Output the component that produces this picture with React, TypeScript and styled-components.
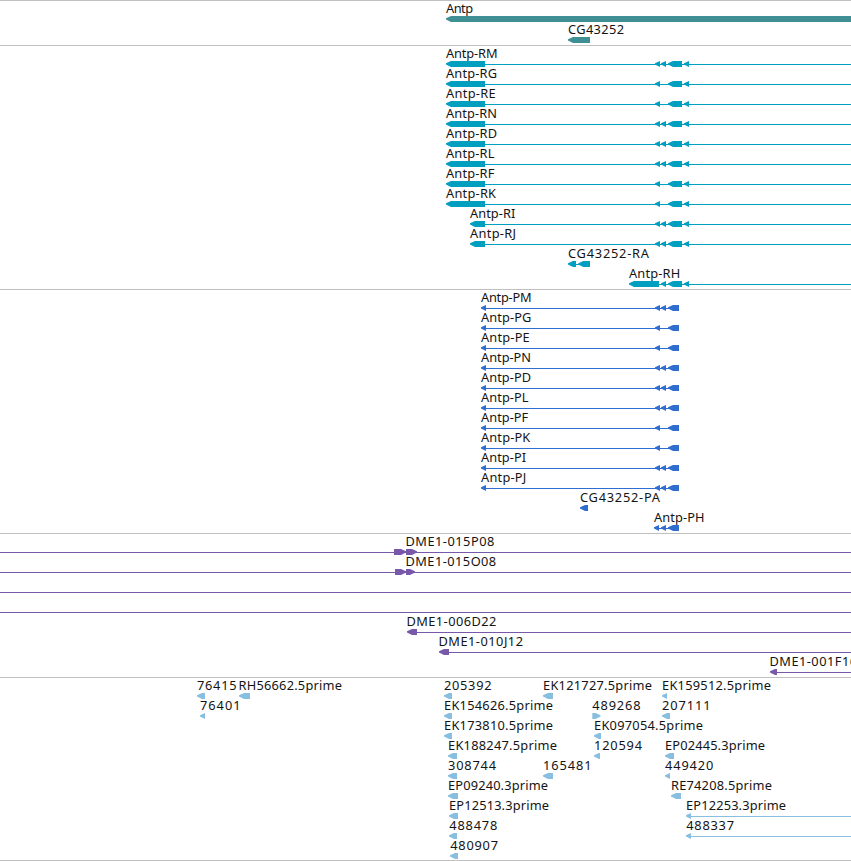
import React, { FC } from 'react';
import styled, { createGlobalStyle } from 'styled-components';

const VIEW_WIDTH = 851;
const ROW_HEIGHT = 20;
const BAR_TOP = 15;
const BAR_HEIGHT = 6;
const HEAD = 5;

const GlobalStyle = createGlobalStyle`
  body {
    margin: 0;
    background: #fff;
    overflow: hidden;
  }
`;

const Browser = styled.main`
  display: flex;
  flex-direction: column;
  width: ${VIEW_WIDTH}px;
  height: 861px;
  box-sizing: border-box;
  border-bottom: 1px solid #c0c0c0;
  overflow: hidden;
`;

const TrackPanel = styled.section<{ $color: string; $gap?: number }>`
  display: flex;
  flex-direction: column;
  flex-shrink: 0;
  gap: ${({ $gap }) => $gap || 0}px;
  padding-bottom: 3px;
  border-top: 1px solid #c0c0c0;
  color: ${({ $color }) => $color};

  &:last-child {
    padding-bottom: 2px;
  }
`;

const Lane = styled.svg`
  display: block;
  flex-shrink: 0;
  overflow: visible;
`;

const Label = styled.text`
  font-family: 'Noto Sans', 'DejaVu Sans', sans-serif;
  font-size: 12.8px;
  fill: #141414;
`;

const Intron = styled.rect`
  fill: currentColor;
`;

const Exon = styled.polygon`
  fill: currentColor;
`;

type Span = [number, number];

interface Feature {
  name?: string;
  // label start and end
  at?: Span;
  exons?: Span[];
  line?: Span;
  forward?: boolean;
}

interface Track {
  id: string;
  color: string;
  gap?: number;
  rows: Feature[][];
}

const arrow = ([start, end]: Span, forward?: boolean) => {
  const top = BAR_TOP;
  const mid = BAR_TOP + BAR_HEIGHT / 2;
  const bottom = BAR_TOP + BAR_HEIGHT;
  if (forward) {
    const neck = Math.max(start, end - HEAD);
    return `${start},${top} ${neck},${top} ${end},${mid - 0.8} ${end},${mid + 0.6} ${neck},${bottom} ${start},${bottom}`;
  }
  const neck = Math.min(end, start + HEAD);
  return `${start},${mid + 0.6} ${start},${mid - 0.8} ${neck},${top} ${end},${top} ${end},${bottom} ${neck},${bottom}`;
};

const SHORT: Span[] = [[655, 660], [668, 682], [684, 689]];
const LONG: Span[] = [[655, 660], [661, 666], [668, 682], [684, 689]];

const transcript = (name: string, start: number, labelEnd: number, exons: Span[]): Feature[] => [
  { name, at: [start, labelEnd], exons: [[start, 485], ...exons], line: [485, VIEW_WIDTH] },
];

const protein = (name: string, labelEnd: number, full: boolean): Feature[] => [
  {
    name,
    at: [481, labelEnd],
    exons: full
      ? [[481, 486], [655, 660], [661, 666], [668, 679]]
      : [[481, 486], [655, 660], [668, 679]],
    line: [484, 672],
  },
];

const read = (name: string, start: number, end: number, labelEnd: number, labelStart = start): Feature => ({
  name,
  at: [labelStart, labelEnd],
  exons: [[start, end]],
});

const tracks: Track[] = [
  {
    id: 'genes',
    color: '#408f94',
    gap: 1,
    rows: [
      [{ name: 'Antp', at: [446, 473], exons: [[446, 851]] }],
      [read('CG43252', 568, 590, 624)],
    ],
  },
  {
    id: 'transcripts',
    color: '#009fc0',
    rows: [
      transcript('Antp-RM', 446, 497.5, LONG),
      transcript('Antp-RG', 446, 497, SHORT),
      transcript('Antp-RE', 446, 495.7, SHORT),
      transcript('Antp-RN', 446, 497, LONG),
      transcript('Antp-RD', 446, 497, LONG),
      transcript('Antp-RL', 446, 494.4, LONG),
      transcript('Antp-RF', 446, 494.4, SHORT),
      transcript('Antp-RK', 446, 496, SHORT),
      transcript('Antp-RI', 470, 515.3, LONG),
      transcript('Antp-RJ', 470, 516, LONG),
      [{ name: 'CG43252-RA', at: [568, 649], exons: [[568, 576], [578.3, 590]], line: [575, 582] }],
      [
        {
          name: 'Antp-RH',
          at: [629, 680.2],
          exons: [[629, 659], ...LONG.slice(1)],
          line: [658, VIEW_WIDTH],
        },
      ],
    ],
  },
  {
    id: 'proteins',
    color: '#306dd0',
    rows: [
      protein('Antp-PM', 531.5, true),
      protein('Antp-PG', 531.3, false),
      protein('Antp-PE', 529.7, false),
      protein('Antp-PN', 531, true),
      protein('Antp-PD', 531, true),
      protein('Antp-PL', 528.5, true),
      protein('Antp-PF', 528.2, false),
      protein('Antp-PK', 530.2, false),
      protein('Antp-PI', 526, true),
      protein('Antp-PJ', 526.3, true),
      [read('CG43252-PA', 580, 588, 660)],
      [
        {
          name: 'Antp-PH',
          at: [654, 704.5],
          exons: [[654, 659], [661, 666], [668, 679]],
          line: [657, 672],
        },
      ],
    ],
  },
  {
    id: 'bacs',
    color: '#7858a8',
    rows: [
      [{ name: 'DME1-015P08', at: [405.5, 494.3], exons: [[394, 406], [406, 417]], line: [0, VIEW_WIDTH], forward: true }],
      [{ name: 'DME1-015O08', at: [405.5, 496.2], exons: [[395, 406], [406, 415]], line: [0, VIEW_WIDTH], forward: true }],
      [{ line: [0, VIEW_WIDTH] }],
      [{ line: [0, VIEW_WIDTH] }],
      [{ name: 'DME1-006D22', at: [406.5, 496.3], exons: [[407, 417]], line: [416, VIEW_WIDTH] }],
      [{ name: 'DME1-010J12', at: [438.5, 523], exons: [[439, 449]], line: [448, VIEW_WIDTH] }],
      [{ name: 'DME1-001F16', at: [769.5, 857], exons: [[770, 777]], line: [776, VIEW_WIDTH] }],
    ],
  },
  {
    id: 'insertions',
    color: '#88bfe0',
    rows: [
      [
        read('76415', 197, 205, 236.5),
        read('RH56662.5prime', 239, 250, 342, 238.5),
        read('205392', 444, 452, 491.5),
        read('EK121727.5prime', 543, 553, 652),
        read('EK159512.5prime', 662, 667, 771),
      ],
      [
        read('76401', 200, 205, 240.5),
        read('EK154626.5prime', 444, 452, 553),
        { ...read('489268', 592.3, 600.5, 640.5, 592.3), forward: true },
        read('207111', 662, 670, 710.5),
      ],
      [
        read('EK173810.5prime', 444, 452, 553),
        read('EK097054.5prime', 594, 601, 703),
      ],
      [
        read('EK188247.5prime', 448, 457, 557),
        read('120594', 594, 600, 642),
        read('EP02445.3prime', 665, 674, 765),
      ],
      [
        read('308744', 448, 457, 496),
        read('165481', 543, 553, 591.7),
        read('449420', 665, 670, 713.3),
      ],
      [
        read('EP09240.3prime', 448, 458, 548),
        read('RE74208.5prime', 671, 681, 772),
      ],
      [
        read('EP12513.3prime', 449, 458, 549),
        { ...read('EP12253.3prime', 686, 691, 786), line: [689, VIEW_WIDTH] },
      ],
      [
        read('488478', 449, 457, 497.3, 449.3),
        { ...read('488337', 686, 691, 734, 686.3), line: [689, VIEW_WIDTH] },
      ],
      [read('480907', 450, 458, 498, 450.3)],
    ],
  },
];

const FeatureGlyph: FC<{ feature: Feature }> = ({ feature }) => {
  const { name, at, exons = [], line, forward } = feature;
  return (
    <g>
      {line && <Intron x={line[0]} y={BAR_TOP + 3} width={line[1] - line[0]} height={1} />}
      {exons.map((exon) => (
        <Exon key={exon[0]} points={arrow(exon, forward)} />
      ))}
      {name && at && (
        <Label x={at[0]} y={12} textLength={at[1] - at[0]} lengthAdjust="spacing">
          {name}
        </Label>
      )}
    </g>
  );
};

const App: FC = () => (
  <>
    <GlobalStyle />
    <Browser>
      {tracks.map(({ id, color, gap, rows }) => (
        <TrackPanel key={id} $color={color} $gap={gap}>
          {rows.map((features, i) => (
            <Lane key={i} width={VIEW_WIDTH} height={ROW_HEIGHT}>
              {features.map((feature, j) => (
                <FeatureGlyph key={j} feature={feature} />
              ))}
            </Lane>
          ))}
        </TrackPanel>
      ))}
    </Browser>
  </>
);

export default App;
